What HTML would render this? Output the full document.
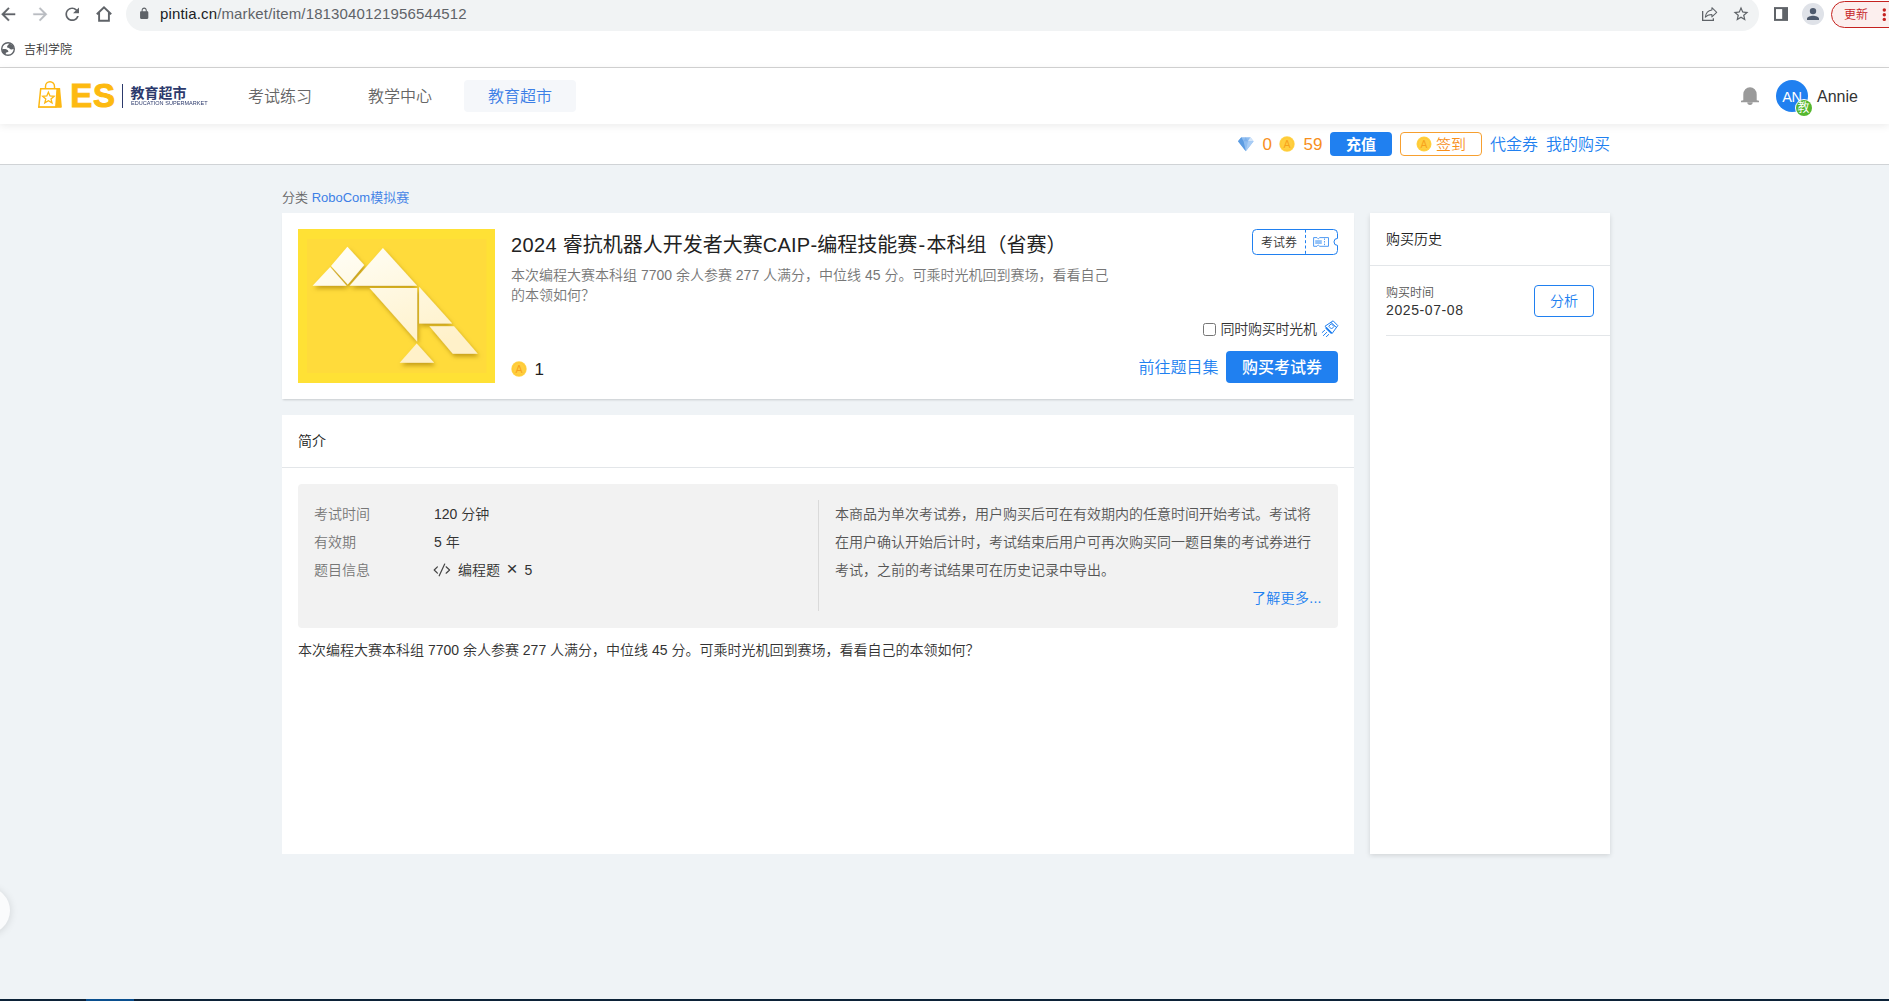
<!DOCTYPE html>
<html lang="zh-CN">
<head>
<meta charset="utf-8">
<title>教育超市</title>
<style>
*{box-sizing:border-box;margin:0;padding:0}
html,body{width:1889px;height:1001px;overflow:hidden}
body{position:relative;background:#eff3f6;font-family:"Liberation Sans","Noto Sans CJK SC",sans-serif;color:#333;font-size:14px;line-height:1;font-weight:350}
.abs{position:absolute}
.t{position:absolute;white-space:nowrap;line-height:1}
a{color:#3d7fe6;text-decoration:none}
/* browser chrome */
#chrome{position:absolute;left:0;top:0;width:1889px;height:68px;background:#fff;border-bottom:1px solid #d4d4d4}
#omni{position:absolute;left:126px;top:-3px;width:1633px;height:34px;border-radius:17px;background:#f1f3f4}
/* header */
#hdr{position:absolute;left:0;top:68px;width:1889px;height:56px;background:#fff;box-shadow:0 2px 8px rgba(0,0,0,.08);z-index:3}
#sub{position:absolute;left:0;top:124px;width:1889px;height:41px;background:#fff;border-bottom:1px solid #d0d3d6;z-index:2}
.nav{position:absolute;top:12px;width:112px;height:32px;border-radius:4px;font-size:16px;line-height:34px;text-align:center;color:#666}
.nav.on{background:#f5f7fa;color:#3d7fe6}
.lab{font-size:14px;line-height:18px;color:#777}
.val{font-size:14px;line-height:18px;color:#333}
.card{position:absolute;background:#fff;box-shadow:0 1px 3px rgba(0,0,0,.08)}
</style>
</head>
<body>
<!-- ===== browser chrome ===== -->
<div id="chrome">
  <div id="omni"></div>
  <svg class="abs" style="left:-2.300px;top:3.750px" width="20.5" height="20.5" viewBox="0 0 24 24"><path fill="#5f6368" stroke="#5f6368" stroke-width=".4" d="M20 11H7.83l5.59-5.59L12 4l-8 8 8 8 1.41-1.41L7.83 13H20v-2z"/></svg>
  <svg class="abs" style="left:29.750px;top:3.750px" width="20.5" height="20.5" viewBox="0 0 24 24"><path fill="#b9bcc1" stroke="#b9bcc1" stroke-width=".4" d="M4 11h12.17l-5.59-5.59L12 4l8 8-8 8-1.41-1.41L16.170 13H4v-2z"/></svg>
  <svg class="abs" style="left:61.900px;top:3.600px" width="20.4" height="20.4" viewBox="0 0 24 24"><path fill="#5f6368" d="M17.65 6.350A7.958 7.958 0 0 0 12 4c-4.42 0-7.99 3.580-7.990 8s3.570 8 7.990 8c3.730 0 6.840-2.550 7.730-6h-2.080A5.990 5.990 0 0 1 12 18c-3.310 0-6-2.690-6-6s2.690-6 6-6c1.660 0 3.140.69 4.220 1.780L13 11h7V4l-2.350 2.350z"/></svg>
  <svg class="abs" style="left:94px;top:4px" width="20" height="20" viewBox="0 0 20 20"><path fill="none" stroke="#5f6368" stroke-width="1.9" stroke-linejoin="miter" d="M2.800 10.300 L10 3.300 L17.200 10.300 M5.100 8.800 V16.700 H14.900 V8.800"/></svg>
  <svg class="abs" style="left:137.750px;top:7.260px" width="12.4" height="13" preserveAspectRatio="none" viewBox="0 0 24 24"><path fill="#5f6368" d="M18 8h-1V6c0-2.760-2.240-5-5-5S7 3.240 7 6v2H6c-1.100 0-2 .9-2 2v10c0 1.100.9 2 2 2h12c1.100 0 2-.9 2-2V10c0-1.100-.9-2-2-2zM9 6c0-1.660 1.340-3 3-3s3 1.340 3 3v2H9V6z"/></svg>
  <svg class="abs" style="left:1px;top:41.850px" width="14" height="14" viewBox="0 0 14 14"><circle cx="7" cy="7" r="6.300" fill="none" stroke="#5f6368" stroke-width="1.400"/><path fill="#5f6368" d="M6.100 5.400 C5.700 4 7 2.500 8.600 1.400 L12.300 3.800 L13 6.800 C11.500 7.300 10.500 8 9.500 7.300 C8.600 6.600 8 5.500 6.100 5.400 Z"/><path fill="#5f6368" d="M1.100 7.300 C2.500 7.100 4 7 5.200 7.200 C6.500 7.600 7.400 8.600 7.500 9.600 C6.800 10.400 5.400 10.300 4.900 10.800 C4.600 11.300 4.800 12 4.700 12.700 L2.300 11.200 L1.100 8.500 Z"/></svg>
  <svg class="abs" style="left:1700px;top:5px;z-index:2" width="20" height="20" viewBox="0 0 20 20"><g fill="none" stroke="#5f6368"><path stroke-width="1.300" d="M2.650 6 V15.350 H13.350 V13.200"/><path stroke-width="1.050" stroke-linejoin="round" d="M11.900 2.700 L16.700 7.300 L11.900 11.900 V9.400 C9 9.400 6.800 10.200 5.300 12.200 C5.800 8.300 8 5.500 11.900 5 Z"/></g></svg>
  <svg class="abs" style="left:1732.050px;top:5.350px;z-index:2" width="18" height="18" viewBox="0 0 24 24"><path fill="#5f6368" d="M22 9.240l-7.190-.62L12 2 9.190 8.630 2 9.240l5.460 4.730L5.820 21 12 17.270 18.180 21l-1.630-7.030L22 9.240zM12 15.400l-3.760 2.270 1-4.280-3.320-2.880 4.380-.38L12 6.100l1.710 4.040 4.380.38-3.320 2.880 1 4.280L12 15.400z"/></svg>
  <svg class="abs" style="left:1773px;top:6px" width="16" height="16" viewBox="0 0 16 16"><rect x="2" y="2.100" width="12" height="11.800" fill="none" stroke="#5f6368" stroke-width="2"/><rect x="9.200" y="2" width="5.800" height="12" fill="#5f6368"/></svg>
  <svg class="abs" style="left:1802px;top:3px" width="22" height="22" viewBox="0 0 22 22"><circle cx="11" cy="11" r="11" fill="#dfe2e8"/><circle cx="11" cy="8.100" r="3.200" fill="#4d596c"/><path fill="#4d596c" d="M5 17 V15.600 C5 13.700 8.500 12.700 11 12.700 S17 13.700 17 15.600 V17 Z"/></svg>
  <div class="abs" style="left:1831px;top:0.500px;width:80px;height:27.200px;border:1px solid #c5221f;border-radius:14px;background:#fcefee"></div>
  <svg class="abs" style="left:1880px;top:6px;z-index:2" width="9" height="18" viewBox="0 0 9 18"><g fill="#c5221f"><circle cx="4.300" cy="4" r="1.700"/><circle cx="4.300" cy="8.700" r="1.700"/><circle cx="4.300" cy="13.400" r="1.700"/></g></svg>

  <div class="t" style="left:160px;top:6px;font-size:15px;line-height:16px;letter-spacing:.14px;color:#5f6368"><span style="color:#202124">pintia.cn</span>/market/item/1813040121956544512</div>
  <div class="t" style="left:24px;top:43px;font-size:12px;line-height:14px;color:#333">吉利学院</div>
  <div class="t" style="left:1844px;top:8px;font-size:12px;line-height:14px;color:#c5221f;z-index:2">更新</div>
</div>

<!-- ===== site header ===== -->
<div id="hdr">
  
  <svg class="abs" style="left:36px;top:11px" width="28" height="30" viewBox="36 79 28 30"><g fill="none" stroke="#fdb813" stroke-width="1.500"><path d="M45.500 88 V86.400 A4.500 4.700 0 0 1 54.500 86.400 V88" stroke-width="1.400"/><path d="M40.700 88.700 H57.200 L55.900 106.900 H38.800 Z"/><path d="M48.400 92.200 L50 96 L54.100 96.300 L51 98.900 L52 102.900 L48.400 100.700 L44.800 102.900 L45.800 98.900 L42.700 96.300 L46.800 96 Z" stroke-width="1.300" stroke-linejoin="miter"/></g><path fill="#fdb813" d="M57 88 H60.100 L61.900 107.600 H55.600 Z"/><path fill="#fdb813" d="M38 106.600 H61 V107.600 H38 Z"/></svg>
  <div class="t" id="es" style="left:70.200px;top:10px;font-size:33px;line-height:36px;font-weight:bold;color:#fdba10;-webkit-text-stroke:1px #fdba10;letter-spacing:.900px">ES</div>
  <div class="abs" style="left:122px;top:16px;width:1.300px;height:23.600px;background:#2c3a6c"></div>
  <div class="t" id="lg1" style="left:130.400px;top:15.500px;font-size:14px;line-height:18px;font-weight:bold;color:#2c3a6c">教育超市</div>
  <div class="t" id="lg2" style="left:130.800px;top:32px;font-size:12px;line-height:14px;color:#2c3a6c;transform:scale(.462);transform-origin:0 0;letter-spacing:.080px">EDUCATION SUPERMARKET</div>
  <svg class="abs" style="left:1740px;top:18px" width="20" height="20" viewBox="0 0 20 20"><path fill="#9a9a9a" d="M3.300 14.300 V8.500 A6.700 7.300 0 0 1 16.700 8.500 V14.300 L19 14.700 V16.200 H1 V14.700 Z"/><path fill="#9a9a9a" d="M7.300 16.200 A2.700 2.700 0 0 0 12.700 16.200 Z"/></svg>
  <div class="abs" style="left:1776px;top:12px;width:32px;height:32px;border-radius:16px;background:#2080f0"></div>
  <div class="t" id="an" style="left:1776px;top:20px;width:32px;text-align:center;font-size:14.500px;line-height:18px;color:#fff;letter-spacing:-.200px">AN</div>
  <div class="abs" style="left:1794.500px;top:31px;width:18px;height:18px;border-radius:9px;background:#fff"></div>
  <div class="abs" style="left:1795.500px;top:32px;width:16px;height:16px;border-radius:8px;background:#55b72f"></div>
  <div class="t" id="jiao" style="left:1795.500px;top:32px;width:16px;text-align:center;font-size:12px;line-height:16px;color:#fff">教</div>
  <div class="nav" style="left:224px">考试练习</div>
  <div class="nav" style="left:344px">教学中心</div>
  <div class="nav on" style="left:464px">教育超市</div>
  <div class="t" style="left:1817px;top:20px;font-size:16px;line-height:18px;color:#333">Annie</div>
</div>

<!-- ===== sub bar ===== -->
<div id="sub">
  <svg class="abs" style="left:1238px;top:12.800px" width="16" height="15" viewBox="0 0 16 15"><path fill="#8fbdf0" d="M3.300 0.200 H12.300 L15.600 4.300 L7.800 14.200 L0 4.300 Z"/><path fill="#5c9ce2" d="M3.300 0.200 L5.600 4.300 H0 Z M0 4.300 H5.600 L7.800 14.200 Z"/><path fill="#d3e5fa" d="M12.300 0.200 L10 4.300 H15.600 Z"/><path fill="#a9cdf5" d="M15.600 4.300 H10 L7.800 14.200 Z"/><path fill="#7fb2ec" d="M5.600 4.300 L7.800 0.200 L10 4.300 Z"/></svg>
  <div class="t" id="n0" style="left:1262.500px;top:12px;font-size:17px;line-height:18px;color:#f78f1c">0</div>
  <svg class="abs" style="left:1279px;top:11.600px" width="16" height="16" viewBox="0 0 16 16"><circle cx="8" cy="8" r="7.700" fill="#ffd247"/><circle cx="8" cy="8" r="6.300" fill="#ffcf40" stroke="#ffc62f" stroke-width=".8"/><text x="8" y="11.700" text-anchor="middle" font-family="Liberation Sans,sans-serif" font-size="10.500" fill="#f7a21b">A</text></svg>
  <div class="t" id="n59" style="left:1303.500px;top:12px;font-size:17px;line-height:18px;color:#f78f1c">59</div>
  <div class="abs" style="left:1330px;top:8px;width:62px;height:24px;border-radius:4px;background:#2080f0"></div>
  <div class="t" id="cz" style="left:1330px;top:9px;width:62px;text-align:center;font-size:15px;line-height:23px;font-weight:bold;color:#fff">充值</div>
  <div class="abs" style="left:1400px;top:8px;width:82px;height:24px;border-radius:4px;border:1px solid #f7a030;background:#fff"></div>
  <svg class="abs" style="left:1415.700px;top:11.600px" width="16" height="16" viewBox="0 0 16 16"><circle cx="8" cy="8" r="7.500" fill="#ffd247"/><circle cx="8" cy="8" r="6.100" fill="#ffcf40" stroke="#ffc62f" stroke-width=".8"/><text x="8" y="11.600" text-anchor="middle" font-family="Liberation Sans,sans-serif" font-size="10.200" fill="#f7a21b">A</text></svg>
  <div class="t" id="qd" style="left:1436px;top:9px;font-size:15px;line-height:23px;color:#f78f1c">签到</div>
  <div class="t" id="djq" style="left:1490px;top:9px;font-size:16px;line-height:23px;color:#2080f0">代金券</div>
  <div class="t" id="wdgm" style="left:1546px;top:9px;font-size:16px;line-height:23px;color:#2080f0">我的购买</div>
</div>

<!-- ===== main ===== -->
<div class="t" style="left:282px;top:191px;font-size:13px;line-height:14px;color:#666">分类 <a>RoboCom模拟赛</a></div>

<div class="card" id="c1" style="left:282px;top:213px;width:1072px;height:186px;box-shadow:0 2px 2px -1px rgba(0,0,0,.16)">
  <svg class="abs" style="left:16px;top:16px" width="197" height="154" viewBox="298 229 197 154">
    <defs>
      <linearGradient id="cr" gradientUnits="userSpaceOnUse" x1="340" y1="246" x2="380" y2="364"><stop offset="0" stop-color="#fffef6"/><stop offset="1" stop-color="#fff1c9"/></linearGradient>
      <filter id="sh" x="-20%" y="-20%" width="150%" height="150%"><feDropShadow dx="1.600" dy="2.800" stdDeviation="2" flood-color="#9c7400" flood-opacity=".6"/></filter>
    </defs>
    <rect x="298" y="229" width="197" height="154" fill="#ffe135"/>
    <rect x="307" y="239" width="179.500" height="134" fill="#ffdb3b"/>
    <g fill="url(#cr)" filter="url(#sh)">
      <path d="M312.600 285.700 H346.600 L330.200 267.100 Z"/>
      <path d="M347.400 246.800 L364.200 265 L347.800 284.400 L331 266 Z"/>
      <path d="M349.700 285.700 H417.100 L382.900 248 Z"/>
      <path d="M369.600 288 H417.100 V341.500 Z"/>
      <path d="M419.100 286.800 V323.600 H452.200 Z"/>
      <path d="M429.500 326.200 H454 L477.700 353.700 H452.800 Z"/>
      <path d="M399.700 362.700 H434.100 L416.700 343.600 Z"/>
    </g>
  </svg>
  <div class="t" id="title" style="left:229px;top:20px;font-size:20px;line-height:24px;font-weight:400;color:#222"><span style="letter-spacing:.360px">2024 </span>睿抗机器人开发者大赛<span style="letter-spacing:.220px">CAIP-</span>编程技能赛<span style="letter-spacing:2.500px;margin-left:1.200px;margin-right:-1.200px">-</span>本科组（省赛）</div>
  <div class="abs" id="desc" style="left:229px;top:52px;width:610px;font-size:14px;line-height:20px;color:#777">本次编程大赛本科组 7700 余人参赛 277 人满分，中位线 45 分。可乘时光机回到赛场，看看自己的本领如何？</div>
  <svg class="abs" style="left:228.900px;top:147.900px" width="16" height="16" viewBox="0 0 16 16"><circle cx="8" cy="8" r="7.700" fill="#ffd247"/><circle cx="8" cy="8" r="6.300" fill="#ffcf40" stroke="#ffc62f" stroke-width=".8"/><text x="8" y="11.700" text-anchor="middle" font-family="Liberation Sans,sans-serif" font-size="10.500" fill="#f7a21b">A</text></svg>
  <div class="t" id="price" style="left:252.500px;top:148px;font-size:17px;line-height:18px;color:#222">1</div>
  <!-- badge -->
  <svg class="abs" style="left:969px;top:15px" width="89" height="28" viewBox="1251 228 89 28"><path fill="#fff" stroke="#2080f0" stroke-width="1" d="M1256.500 229.500 H1333.500 A4 4 0 0 1 1337.500 233.500 V238.400 A3.500 3.500 0 0 0 1337.500 245.400 V250.500 A4 4 0 0 1 1333.500 254.500 H1256.500 A4 4 0 0 1 1252.500 250.500 V233.500 A4 4 0 0 1 1256.500 229.500 Z"/><path stroke="#2080f0" stroke-width="1" stroke-dasharray="3 2.300" d="M1305.500 229.600 V254.500"/><g fill="none" stroke="#4f9af3" stroke-width="1"><path d="M1313.600 237.600 H1317 L1318.300 238.900 L1319.700 237.600 H1328.500 V246.300 H1319.700 L1318.300 245 L1317 246.300 H1313.600 Z"/><path d="M1324.500 238.500 V245.500" stroke-dasharray="1.400 1.200"/></g><rect x="1315.200" y="240.100" width="6.600" height="3.900" fill="#93c2f8"/></svg>
  <div class="t" id="ksq" style="left:979px;top:23px;font-size:12px;line-height:14px;color:#333">考试券</div>
  <!-- checkbox row -->
  <div class="abs" style="left:921px;top:110px;width:13px;height:13px;border:1px solid #767676;border-radius:2.500px;background:#fff"></div>
  <div class="t" id="tsgm" style="left:938.500px;top:107px;font-size:14px;line-height:18px;color:#333;letter-spacing:-.250px">同时购买时光机</div>
  <svg class="abs" style="left:1038px;top:104px" width="20" height="20" viewBox="1320 317 20 20"><g fill="none" stroke="#2080f0" stroke-width="1" stroke-linecap="round" stroke-linejoin="round"><path d="M1333.400 321.100 L1337.800 325.600 L1332.200 333.400 L1325.300 326.500 Z"/><path d="M1331.200 322.600 L1336.600 327.600"/><path d="M1326.300 328 L1331.200 332.900" stroke-width="1.800"/><path d="M1331.500 324 L1334 326.500 L1331.500 329 L1329 326.500 Z"/><path d="M1322.200 332.500 L1324.600 330.400 M1323.400 335.600 L1326.700 332.400 M1326.400 336.600 L1328.700 334.500"/></g></svg>
  <div class="t" id="qwtmj" style="left:856.500px;top:143px;font-size:16px;line-height:24px;color:#2080f0">前往题目集</div>
  <div class="abs" style="left:944px;top:138px;width:112px;height:32px;border-radius:4px;background:#2080f0"></div>
  <div class="t" id="gmksq" style="left:944px;top:138px;width:112px;text-align:center;font-size:16px;line-height:34px;font-weight:500;color:#fff">购买考试券</div>
</div>
<div class="card" id="c2" style="left:282px;top:415px;width:1072px;height:439px;box-shadow:none">
  <div class="t" id="jj" style="left:16px;top:17px;font-size:14px;line-height:18px;color:#222">简介</div>
  <div class="abs" style="left:0;top:52px;width:1072px;height:1px;background:#e3e6e9"></div>
  <div class="abs" style="left:16px;top:69px;width:1040px;height:144px;border-radius:4px;background:#f2f2f2"></div>
  <div class="t lab" style="left:32px;top:90px">考试时间</div>
  <div class="t lab" style="left:32px;top:118px">有效期</div>
  <div class="t lab" style="left:32px;top:146px">题目信息</div>
  <div class="t val" style="left:152px;top:90px">120 分钟</div>
  <div class="t val" style="left:152px;top:118px">5 年</div>
  <svg class="abs" style="left:151px;top:147px" width="18" height="16" viewBox="433 562 18 16"><g fill="none" stroke="#444" stroke-width="1.200" stroke-linecap="round" stroke-linejoin="round"><path d="M437.400 566.800 L434.200 570 L437.400 573.200"/><path d="M444.700 564 L439.200 575.800"/><path d="M446.100 566.800 L449.600 570 L446.100 573.200"/></g></svg>
  <div class="t val" style="left:176px;top:146px">编程题</div>
  <div class="t val" style="left:224.500px;top:145px;font-size:19px">×</div>
  <div class="t val" style="left:242.500px;top:146px">5</div>
  <div class="abs" style="left:536px;top:85px;width:1px;height:111px;background:#dadada"></div>
  <div class="abs" id="note" style="left:553px;top:85px;width:487px;font-size:14px;line-height:28px;color:#555">本商品为单次考试券，用户购买后可在有效期内的任意时间开始考试。考试将在用户确认开始后计时，考试结束后用户可再次购买同一题目集的考试券进行考试，之前的考试结果可在历史记录中导出。</div>
  <div class="t" id="more" style="left:970px;top:174px;font-size:14px;line-height:18px;color:#2080f0;letter-spacing:.300px">了解更多...</div>
  <div class="t" id="body" style="left:16px;top:226px;font-size:14px;line-height:18px;color:#333">本次编程大赛本科组 7700 余人参赛 277 人满分，中位线 45 分。可乘时光机回到赛场，看看自己的本领如何？</div>
</div>
<div class="card" id="c3" style="left:1370px;top:213px;width:240px;height:641px;box-shadow:0 1.5px 5px rgba(0,0,0,.13)">
  <div class="t" id="gmls" style="left:16px;top:17px;font-size:14px;line-height:18px;color:#222">购买历史</div>
  <div class="abs" style="left:0;top:52px;width:240px;height:1px;background:#e3e6e9"></div>
  <div class="t" id="gmsj" style="left:16px;top:73px;font-size:12px;line-height:14px;color:#555">购买时间</div>
  <div class="t" id="date" style="left:16px;top:88px;font-size:14px;line-height:18px;color:#333;letter-spacing:.600px">2025-07-08</div>
  <div class="abs" style="left:164px;top:72px;width:60px;height:32px;border:1px solid #2080f0;border-radius:4px;background:#fff"></div>
  <div class="t" id="fx" style="left:164px;top:72px;width:60px;text-align:center;font-size:14px;line-height:32px;color:#2080f0">分析</div>
  <div class="abs" style="left:16px;top:122px;width:224px;height:1px;background:#e3e6e9"></div>
</div>


<div class="abs" style="left:-37.300px;top:887.300px;width:47.200px;height:47.200px;border-radius:50%;background:#fafbfc;box-shadow:0 1px 9px rgba(0,0,0,.13)"></div>
<div class="abs" style="left:0;top:999px;width:1889px;height:2px;background:#0c2238"></div>
<div class="abs" style="left:86px;top:999px;width:48px;height:2px;background:#0a4f8f"></div>
</body>
</html>
